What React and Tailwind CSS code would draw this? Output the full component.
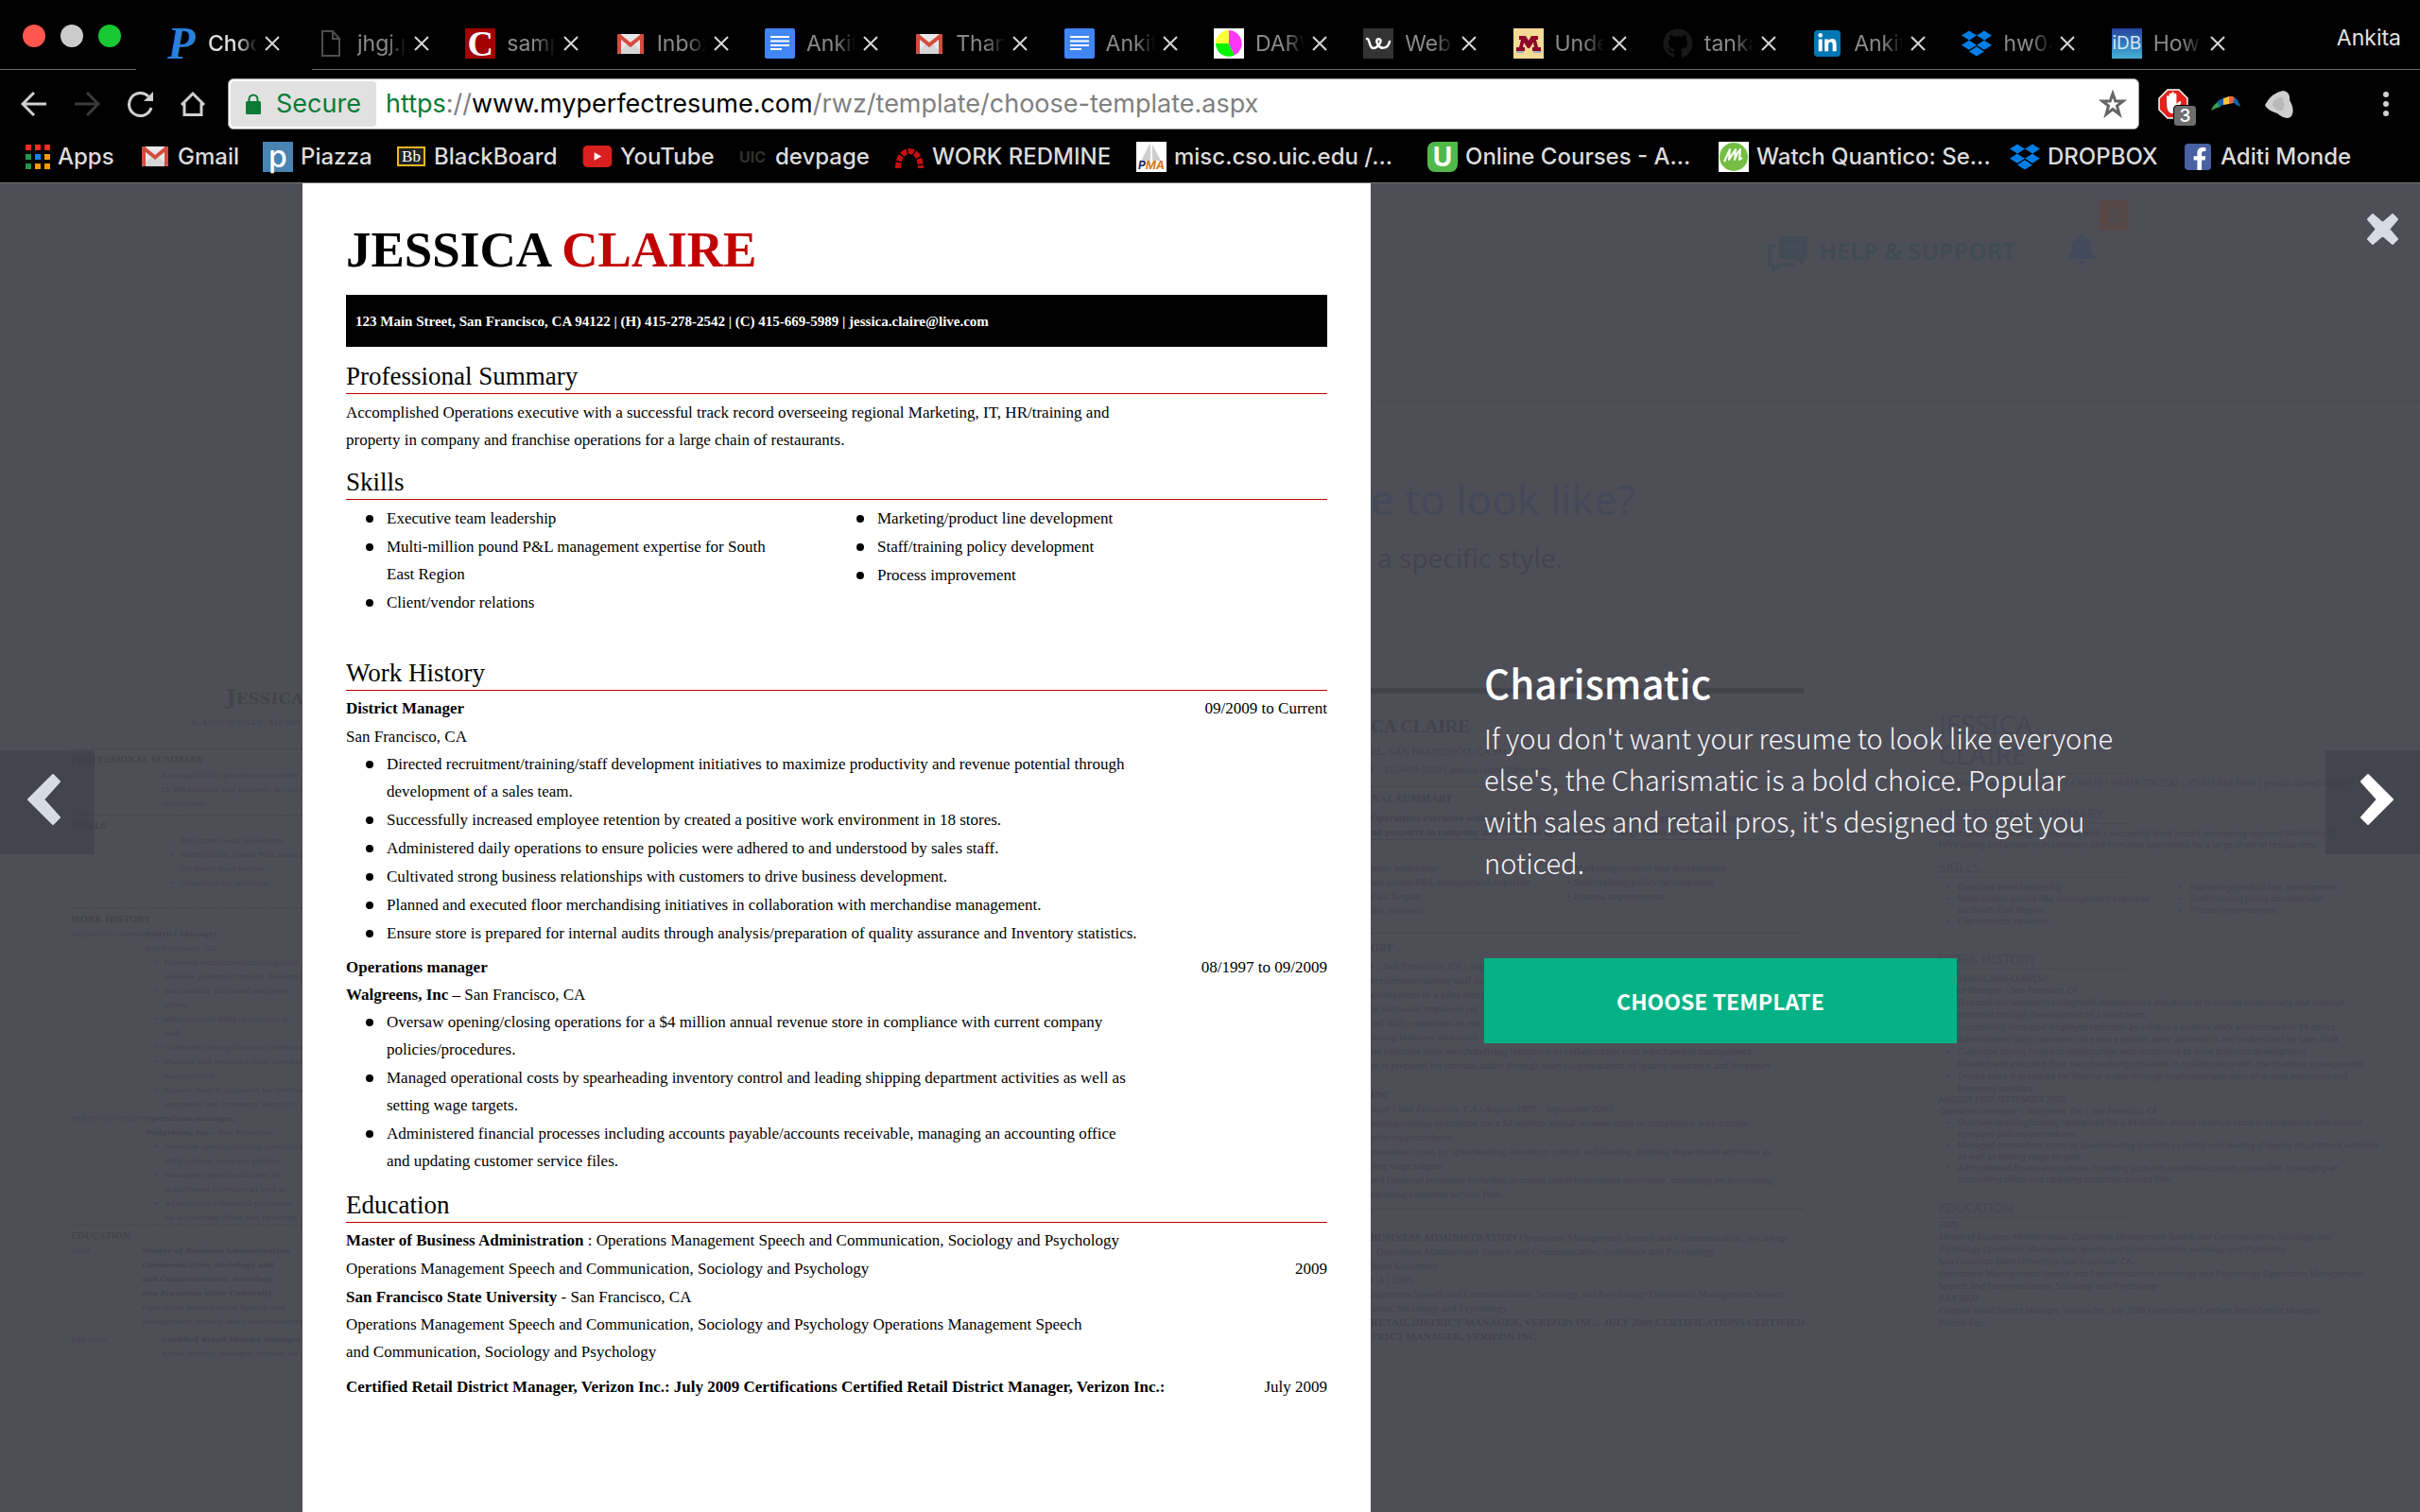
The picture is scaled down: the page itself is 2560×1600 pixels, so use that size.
import React from "react";
import { FaBell, FaDropbox, FaFacebookF, FaGithub, FaLinkedinIn } from "react-icons/fa";

/* ---------- site icons ---------- */

function GmailIcon() {
  return (
    <svg viewBox="0 0 28 21" className="h-[21px] w-[28px]">
      <rect width="28" height="21" rx="2" fill="#e8e8e8" />
      <path d="M0 21 L11 10 L14 12.500 L17 10 L28 21Z" fill="#d6d6d6" />
      <path d="M0 2Q0 0 2 0H4V21H2Q0 21 0 19ZM28 2Q28 0 26 0H24V21H26Q28 21 28 19Z" fill="#d54b3d" />
      <path d="M1 1 L14 11.500 L27 1" fill="none" stroke="#d54b3d" strokeWidth="4" />
    </svg>
  );
}

function DocsIcon() {
  return (
    <svg viewBox="0 0 32 32" className="size-8">
      <rect width="32" height="32" rx="2" fill="#4285f4" />
      <path d="M6 9H26M6 13.500H26M6 18H26M6 22H18" stroke="#fff" strokeWidth="2" />
    </svg>
  );
}

function FileIcon() {
  return (
    <svg viewBox="0 0 20 28" className="h-[28px] w-[20px]" fill="none" stroke="#4d4d4d" strokeWidth="2">
      <path d="M1 1H12L19 9V27H1ZM12 1V9H19" />
    </svg>
  );
}

function PieIcon() {
  return (
    <svg viewBox="0 0 32 32" className="size-8">
      <rect width="32" height="32" fill="#fff" />
      <path d="M16 16V2A14 14 0 0 0 2 16Z" fill="#ffff3a" />
      <path d="M16 16H2A14 14 0 0 0 22 28.500Z" fill="#00f400" />
      <path d="M16 16L22 28.500A14 14 0 0 0 16 2Z" fill="#ff35fa" />
    </svg>
  );
}

function WeeblyIcon() {
  return (
    <svg viewBox="0 0 32 32" className="size-8">
      <rect width="32" height="32" fill="#333" />
      <path
        d="M4 11C7 10 6 21 11 21C15 21 20 14 18 12C16 10 13 12 15 16C17 22 26 23 28 14"
        fill="none"
        stroke="#fff"
        strokeWidth="2.500"
        strokeLinecap="round"
      />
    </svg>
  );
}

function MinnesotaIcon() {
  return (
    <svg viewBox="0 0 32 32" className="size-8">
      <rect width="32" height="32" fill="#f3db93" />
      <path d="M3 24H11V26H3ZM21 24H30V26H21Z" fill="#a9adb9" />
      <path
        d="M6 8H13L16 13L19 8H26V12H24L26 20H29V24H20V20H22L21 15L17 21H15L11 15L10 20H12V24H3V20H6L8 12H6Z"
        fill="#90062c"
      />
    </svg>
  );
}

function AppsIcon() {
  const cells = ["#ff2a20", "#ff2a20", "#ff2a20", "#24974a", "#1183ff", "#f59b00", "#24974a", "#f59b00", "#f59b00"];
  return (
    <span className="grid grid-cols-3 gap-1">
      {cells.map((c, i) => (
        <span key={i} className="size-[6px]" style={{ backgroundColor: c }} />
      ))}
    </span>
  );
}

function YoutubeIcon() {
  return (
    <svg viewBox="0 0 32 24" className="h-[23px] w-8">
      <rect width="32" height="24" rx="5" fill="#d8201f" />
      <path d="M12.500 7.500L20.500 12L12.500 16.500Z" fill="#fff" />
    </svg>
  );
}

function RedmineIcon() {
  return (
    <svg viewBox="0 0 32 24" className="h-6 w-8">
      <path d="M4 24C4 0 28 0 28 24" fill="none" stroke="#c41010" strokeWidth="6" strokeDasharray="6 1.500" />
    </svg>
  );
}

function SailIcon() {
  return (
    <span className="relative flex size-8 items-end justify-center bg-white">
      <svg viewBox="0 0 32 22" className="absolute top-0 left-0 h-[22px] w-8" fill="#cfcfcf">
        <path d="M15 1L15 20H5ZM17 3L26 20H17Z" />
      </svg>
      <b className="relative text-[12px] leading-[14px] italic text-[#20255c]">
        P<span className="text-[#e07a1c]">MA</span>
      </b>
    </span>
  );
}

function CircleMIcon() {
  return (
    <svg viewBox="0 0 32 32" className="size-8">
      <rect width="32" height="32" fill="#fff" />
      <circle cx="16" cy="16" r="15" fill="#74bf43" />
      <path d="M6 21C8 17 10 12 12 8L11 19L18 8L17 19C19 14 21 10 23 8L22 19L25 17" fill="none" stroke="#fff" strokeWidth="2" strokeLinejoin="round" />
    </svg>
  );
}

const icons = {
  p: <b className="font-['Liberation_Serif',serif] text-[48px] leading-8 italic text-[#2a7fdc]">P</b>,
  file: <FileIcon />,
  c: (
    <b className="flex size-8 items-center justify-center bg-[#a30000] font-['Liberation_Serif',serif] text-[38px] leading-8 text-white">
      C
    </b>
  ),
  gmail: <GmailIcon />,
  docs: <DocsIcon />,
  pie: <PieIcon />,
  weebly: <WeeblyIcon />,
  minn: <MinnesotaIcon />,
  github: <FaGithub className="size-8 text-[#191717]" />,
  linkedin: (
    <span className="flex size-7 items-center justify-center rounded-sm bg-[#0077b5]">
      <FaLinkedinIn className="size-[22px] text-white" />
    </span>
  ),
  dropbox: <FaDropbox className="size-8 text-[#007ee5]" />,
  idb: (
    <span className="flex size-8 items-center justify-center bg-linear-to-b from-[#2743a0] to-[#45b1d6] text-[19px] leading-8 text-[#d5e6f5]">
      iDB
    </span>
  ),
  apps: <AppsIcon />,
  piazza: (
    <span className="flex size-8 items-center justify-center bg-[#4783b3] text-[32px] leading-6 font-medium text-white">
      p
    </span>
  ),
  bb: (
    <span className="flex h-[21px] w-[30px] items-center justify-center border-2 border-[#e8b61f] bg-[#222] font-['Liberation_Serif',serif] text-[17px] leading-4 text-white">
      Bb
    </span>
  ),
  youtube: <YoutubeIcon />,
  uic: <span className="text-[16px] leading-6 font-bold text-[#2f2f2f]">UIC</span>,
  redmine: <RedmineIcon />,
  sail: <SailIcon />,
  udemy: (
    <b className="flex size-8 items-center justify-center rounded-lg rounded-tr-none bg-[#51b84a] text-[28px] leading-8 text-white">
      U
    </b>
  ),
  circlem: <CircleMIcon />,
  facebook: (
    <span className="flex size-7 items-end justify-end rounded-sm bg-[#4861a3]">
      <FaFacebookF className="size-6 text-white" />
    </span>
  ),
};

/* ---------- browser chrome ---------- */

const tabs = [
  ["file", "jhgj.pdf"],
  ["c", "sample"],
  ["gmail", "Inbox"],
  ["docs", "Ankita"],
  ["gmail", "Thank"],
  ["docs", "Ankita"],
  ["pie", "DARW"],
  ["weebly", "Webs"],
  ["minn", "Under"],
  ["github", "tanka"],
  ["linkedin", "Ankita"],
  ["dropbox", "hw04"],
  ["idb", "How"],
];

function Tab({ icon, title, active }) {
  return (
    <div className={active ? "flex w-[186px] pt-[30px] pl-8" : "flex flex-1 border-b border-[#6b6b6b] pt-[30px] pl-1"}>
      <button type="button" className="flex h-8 items-center gap-3">
        <span className="flex w-8 items-center justify-center">{icons[icon]}</span>
        <span
          className={
            "w-[52px] overflow-hidden text-left text-[23px] leading-8 whitespace-nowrap [mask-image:linear-gradient(to_right,black_60%,transparent)] " +
            (active ? "font-medium text-[#dedede]" : "text-[#8a8a8a]")
          }
        >
          {title}
        </span>
      </button>
      <button type="button" aria-label={"Close " + title} className="ml-2 flex h-8 items-center">
        <svg viewBox="0 0 16 16" className="size-4" stroke="#d6d6d6" strokeWidth="2">
          <path d="M1 1L15 15M15 1L1 15" />
        </svg>
      </button>
    </div>
  );
}

function NavButton({ label, dim, children }) {
  return (
    <button type="button" aria-label={label} className={dim ? "text-[#3a3a3a]" : "text-[#d0d0d0]"}>
      <svg viewBox="0 0 28 28" className="size-7" fill="none" stroke="currentColor" strokeWidth="3">
        {children}
      </svg>
    </button>
  );
}

const bookmarks = [
  ["gmail", "Gmail", "w-[130px]"],
  ["piazza", "Piazza", "w-[141px]"],
  ["bb", "BlackBoard", "w-[197px]"],
  ["youtube", "YouTube", "w-[164px]"],
  ["uic", "devpage", "w-[166px]"],
  ["redmine", "WORK REDMINE", "w-[256px]"],
  ["sail", "misc.cso.uic.edu /...", "w-[308px]"],
  ["udemy", "Online Courses - A...", "w-[308px]"],
  ["circlem", "Watch Quantico: Se...", "w-[308px]"],
  ["dropbox", "DROPBOX", "w-[183px]"],
  ["facebook", "Aditi Monde", "w-[200px]"],
];

function BrowserChrome() {
  return (
    <header className="border-b border-[#777] bg-black">
      <div className="flex h-[74px]">
        <div className="flex w-36 items-start gap-4 border-b border-[#6b6b6b] pt-[26px] pl-6">
          <button type="button" aria-label="Close window" className="size-6 rounded-full bg-[#ff564d]" />
          <button type="button" aria-label="Minimise window" className="size-6 rounded-full bg-[#cbcbcb]" />
          <button type="button" aria-label="Zoom window" className="size-6 rounded-full bg-[#18c932]" />
        </div>
        <Tab icon="p" title="Choose" active />
        <div className="flex w-[2058px]">
          {tabs.map(([icon, title], i) => (
            <Tab key={i} icon={icon} title={title} />
          ))}
        </div>
        <div className="flex flex-1 justify-end border-b border-[#6b6b6b] pt-6 pr-5">
          <button type="button" className="h-8 text-[23px] leading-8 text-[#e2e2e2]">
            Ankita
          </button>
        </div>
      </div>

      <div className="flex items-center pt-[9px] pl-[22px]">
        <nav className="flex w-[219px] gap-7">
          <NavButton label="Back">
            <path d="M27 14H2M14 2L2 14L14 26" />
          </NavButton>
          <NavButton label="Forward" dim>
            <path d="M1 14H26M14 2L26 14L14 26" />
          </NavButton>
          <NavButton label="Reload">
            <path d="M26 18A12 12 0 1 1 23 6" />
            <path d="M28 1V11H18Z" fill="currentColor" stroke="none" />
          </NavButton>
          <NavButton label="Home">
            <path d="M2 15L14 3L26 15M5 13V25.500H23V13" />
          </NavButton>
        </nav>
        <div className="flex h-[54px] flex-1 items-center rounded-md border border-[#999] bg-white text-[27px] leading-[48px]">
          <button type="button" className="ml-[2px] flex h-12 w-[154px] items-center rounded bg-[#e1e1e1] pl-4 text-[#0b7a35]">
            <svg viewBox="0 0 16 22" className="h-[22px] w-4">
              <rect y="8" width="16" height="14" rx="1.500" fill="currentColor" />
              <path d="M3.500 9V6a4.500 4.500 0 0 1 9 0V9" fill="none" stroke="currentColor" strokeWidth="2" />
            </svg>
            <span className="ml-4">Secure</span>
          </button>
          <div
            role="textbox"
            aria-label="Address"
            contentEditable
            suppressContentEditableWarning
            className="ml-[10px] flex-1 whitespace-nowrap text-[#808080]"
          >
            <span className="text-[#0b7a35]">https</span>://<span className="text-black">www.myperfectresume.com</span>
            /rwz/template/choose-template.aspx
          </div>
          <button type="button" aria-label="Bookmark this page" className="mr-[12px]">
            <svg viewBox="0 0 30 30" className="size-[30px]" fill="none" stroke="#666" strokeWidth="3">
              <path d="M15 4L17.800 12H26L19.500 17L22 26L15 20.500L8 26L10.500 17L4 12H12.200Z" />
            </svg>
          </button>
        </div>
        <div className="flex h-[54px] w-[297px] items-center pl-5">
          <button type="button" aria-label="Ad blocker, 3 blocked" className="relative">
            <svg viewBox="0 0 32 32" className="size-8">
              <path d="M10 1H22L31 10V22L22 31H10L1 22V10Z" fill="#e2221c" stroke="#fff" strokeWidth="1.500" />
              <path
                d="M9 13V8.500a1.300 1.300 0 0 1 2.600 0V6a1.300 1.300 0 0 1 2.600 0V4.500a1.300 1.300 0 0 1 2.600 0V6a1.300 1.300 0 0 1 2.600 0V16l3-3q2 0 2 1.500L20 24Q15 28 11 24Q9 21 9 13Z"
                fill="#fff"
              />
            </svg>
            <span className="absolute top-[17px] left-4 flex h-[23px] w-[25px] items-center justify-center rounded-sm border border-black bg-[#6e6e6e] text-[19px] leading-5 font-medium text-white">
              3
            </span>
          </button>
          <button type="button" aria-label="Boomerang" className="ml-6">
            <svg viewBox="0 0 32 18" className="h-[18px] w-8">
              <path d="M0 16Q2 10 7 7L10 12Q5 13 0 16Z" fill="#35a256" />
              <path d="M6 7Q9 4 13 3L14 10Q11 10 9 12Z" fill="#1066ab" />
              <path d="M13 3L19 1V9L13 10Z" fill="#fbc336" />
              <path d="M19 1Q24 0 25 3L24 8L19 9Z" fill="#ee6440" />
              <path d="M25 2Q29 5 31 12Q27 11 23 7Z" fill="#1066ab" />
            </svg>
          </button>
          <button type="button" aria-label="Extension" className="ml-6">
            <svg viewBox="0 0 32 32" className="size-8">
              <path d="M1 17Q8 4 20 2Q28 3 27 12Q33 22 29 29Q24 34 14 26Q2 22 1 17Z" fill="#cfcfcf" />
              <path d="M9 17Q10 9 19 9Q23 16 20 22Q14 26 9 17Z" fill="#b9b9b9" />
            </svg>
          </button>
          <button type="button" aria-label="Menu" className="mr-[33px] ml-auto flex flex-col gap-1">
            <span className="size-[6px] rounded-full bg-[#d0d0d0]" />
            <span className="size-[6px] rounded-full bg-[#d0d0d0]" />
            <span className="size-[6px] rounded-full bg-[#d0d0d0]" />
          </button>
        </div>
      </div>

      <nav className="flex h-14 items-center pt-px pl-[27px] text-[24px] leading-8 font-medium whitespace-nowrap text-[#dcdcdc]">
        <a href="#apps" className="flex w-[121px] items-center gap-2">
          {icons.apps}
          Apps
        </a>
        {bookmarks.map(([icon, title, width]) => (
          <a key={title} href="#bookmark" className={"flex items-center gap-2 " + width}>
            <span className="flex w-8 shrink-0 items-center justify-center">{icons[icon]}</span>
            {title}
          </a>
        ))}
      </nav>
    </header>
  );
}

/* ---------- dimmed page behind the dialog ---------- */

function Lines({ items, className = "" }) {
  return (
    <div className={className}>
      {items.map((t, i) => (
        <p key={i}>{t}</p>
      ))}
    </div>
  );
}

function Bullets({ items, className = "" }) {
  return (
    <ul className={className}>
      {items.map((lines, i) => (
        <li key={i} className="flex">
          <span className="w-5 shrink-0 pl-2">•</span>
          <Lines items={lines} />
        </li>
      ))}
    </ul>
  );
}

function LeftThumbnail() {
  return (
    <div
      aria-hidden="true"
      className="absolute inset-0 overflow-hidden pt-[529px] pl-[75px] font-['DejaVu_Serif',serif] text-[8px] leading-[15px] whitespace-nowrap text-[#43434c]"
    >
      <p className="pl-[164px] text-[22px] leading-7 font-bold text-[#424446]">
        J<span className="text-[17px]">ESSICA</span>
      </p>
      <Lines className="mt-1 pl-[127px]" items={["H: 415-278-2542 C: 415-669"]} />
      <div className="mt-5 border-t border-dashed border-[#43434b] pt-1">
        <h4 className="text-[9px] font-bold text-[#424446]">PROFESSIONAL SUMMARY</h4>
        <Lines
          className="mt-px pl-24"
          items={["Accomplished Operations executive", "IT, HR/training and property in company", "restaurants."]}
        />
      </div>
      <div className="mt-1 border-t border-dashed border-[#43434b] pt-1">
        <h4 className="text-[9px] font-bold text-[#424446]">SKILLS</h4>
        <Bullets
          className="pl-24"
          items={[["Executive team leadership"], ["Multi-million pound P&L management", "for South East Region"], ["Client/vendor relations"]]}
        />
      </div>
      <div className="mt-[18px] border-t border-dashed border-[#43434b] pt-[5px]">
        <h4 className="text-[9px] font-bold text-[#424446]">WORK HISTORY</h4>
        <div className="flex">
          <p className="w-24">09/2009 to Current</p>
          <div>
            <p className="font-bold">District Manager,</p>
            <p className="italic">San Francisco, CA</p>
            <Bullets
              items={[
                ["Directed recruitment/training/staff", "revenue potential through development"],
                ["Successfully increased employee", "stores."],
                ["Administered daily operations to", "staff."],
                ["Cultivated strong business relationships"],
                ["Planned and executed floor merchandising", "management."],
                ["Ensure store is prepared for internal", "assurance and Inventory statistics."],
              ]}
            />
          </div>
        </div>
        <div className="flex">
          <p className="w-24">08/1997 to 09/2009</p>
          <div>
            <p className="font-bold">Operations manager,</p>
            <p>
              <b>Walgreens, Inc – </b>
              <i>San Francisco</i>
            </p>
            <Bullets
              items={[
                ["Oversaw opening/closing operations", "with current company policies"],
                ["Managed operational costs by", "department activities as well as"],
                ["Administered financial processes", "an accounting office and updating"],
              ]}
            />
          </div>
        </div>
      </div>
      <div className="border-t border-dashed border-[#43434b] pt-1">
        <h4 className="text-[9px] font-bold text-[#424446]">EDUCATION</h4>
        <div className="flex">
          <p className="w-24">2009</p>
          <div>
            <Lines
              className="font-bold"
              items={["Master of Business Administration", "Communication, Sociology and", "and Communication, Sociology"]}
            />
            <p className="font-bold italic">San Francisco State University</p>
            <Lines items={["Operations Management Speech and", "Management Speech and Communication"]} />
          </div>
        </div>
        <div className="mt-1 flex">
          <p className="w-24">July 2009</p>
          <div>
            <p className="font-bold">Certified Retail District Manager</p>
            <p>Retail District Manager, Verizon Inc</p>
          </div>
        </div>
      </div>
    </div>
  );
}

function MiddleThumbnail() {
  return (
    <div className="w-[601px] font-['Liberation_Serif',serif] text-[11px] leading-[15px] text-[#43434c]">
      <div className="mr-[143px] border-t-[6px] border-[#43434b] pt-[23px]">
        <p className="text-[19px] leading-6 font-bold">CA CLAIRE</p>
        <p className="mt-[7px]">EL, SAN FRANCISCO, CA 94122</p>
        <p className="mt-1">C: 415-669-5989 | jessica.claire@live.com</p>
      </div>
      <div className="mt-[10px] mr-[143px] border-t border-[#46464f] pt-[5px]">
        <h4 className="text-[12px] font-bold italic">NAL SUMMARY</h4>
        <Lines
          className="mt-[5px] font-bold"
          items={[
            "Operations executive with a successful track record overseeing regional Marketing, IT,",
            "nd property in company and franchise operations for a large chain of restaurants.",
          ]}
        />
      </div>
      <div className="mr-[143px] grid grid-cols-[208px_1fr] border-t border-[#46464f] pt-[22px]">
        <Lines items={["team leadership", "ion pound P&L management expertise", "East Region", "dor relations"]} />
        <Lines items={["• Marketing/product line development", "• Staff/training policy development", "• Process improvement"]} />
      </div>
      <div className="mt-4 mr-[143px] border-t border-[#46464f] pt-2">
        <h4 className="text-[12px] font-bold italic">ORY</h4>
        <p className="mt-1 italic">r | San Francisco, CA | September</p>
        <Lines
          items={[
            "ecruitment/training/staff de",
            "evelopment of a sales team",
            "ly increased employee ret",
            "red daily operations to ens",
            "strong business relationsh",
            "nd executed floor merchandising initiatives in collaboration with merchandise management.",
            "re is prepared for internal audits through analysis/preparation of quality assurance and Inventory",
          ]}
        />
        <p className="mt-4 font-bold">INC</p>
        <p className="italic">ager | San Francisco, CA | August 1997 - September 2009</p>
        <Lines
          items={[
            "pening/closing operations for a $4 million annual revenue store in compliance with current",
            "policies/procedures.",
            "perational costs by spearheading inventory control and leading shipping department activities as",
            "ting wage targets.",
            "red financial processes including accounts payable/accounts receivable, managing an accounting",
            "updating customer service files.",
          ]}
        />
      </div>
      <div className="mt-2 mr-[143px] border-t border-[#46464f] pt-[22px]">
        <p>
          <b>BUSINESS ADMINISTRATION</b> Operations Management Speech and Communication, Sociology
        </p>
        <Lines
          items={[
            ": Operations Management Speech and Communication, Sociology and Psychology",
            "State University",
            "CA | 2009",
            "nagement Speech and Communication, Sociology and Psychology Operations Management Speech",
            "ation, Sociology and Psychology",
          ]}
        />
        <Lines
          className="font-bold"
          items={["RETAIL DISTRICT MANAGER, VERIZON INC.: JULY 2009 CERTIFICATIONS CERTIFIED", "TRICT MANAGER, VERIZON INC."]}
        />
      </div>
    </div>
  );
}

function DottedHeading({ children, className = "" }) {
  return (
    <h4 className={"w-[201px] border-b border-dotted border-[#43434c] text-[14px] leading-5 text-[#444755] " + className}>{children}</h4>
  );
}

function RightThumbnail() {
  return (
    <div className="pt-[22px] font-['Noto_Sans',sans-serif] text-[9px] leading-3 text-[#43434c]">
      <p className="w-[201px] border-b border-dotted border-[#43434c] pb-1 text-[28px] leading-8 text-[#444755]">
        JESSICA
        <br />
        CLAIRE
      </p>
      <p className="mt-1">123 Main Street, San Francisco, CA 94122 | (H) 415-278-2542 | (C) 415-669-5989 | jessica.claire@live.com</p>
      <DottedHeading className="mt-4">PROFESSIONAL SUMMARY</DottedHeading>
      <Lines
        className="mt-1"
        items={[
          "Accomplished Operations executive with a successful track record overseeing regional Marketing, IT,",
          "HR/training and property in company and franchise operations for a large chain of restaurants.",
        ]}
      />
      <DottedHeading className="mt-2">SKILLS</DottedHeading>
      <div className="mt-1 grid grid-cols-[246px_1fr]">
        <Bullets items={[["Executive team leadership"], ["Multi-million pound P&L management expertise", "for South East Region"], ["Client/vendor relations"]]} />
        <Bullets items={[["Marketing/product line development"], ["Staff/training policy development"], ["Process improvement"]]} />
      </div>
      <DottedHeading className="mt-6">WORK HISTORY</DottedHeading>
      <p className="mt-1">SEPTEMBER 2009-CURRENT</p>
      <p className="italic">District Manager | San Francisco, CA</p>
      <Bullets
        className="leading-[13px]"
        items={[
          ["Directed recruitment/training/staff development initiatives to maximize productivity and revenue", "potential through development of a sales team."],
          ["Successfully increased employee retention by created a positive work environment in 18 stores."],
          ["Administered daily operations to ensure policies were adhered to and understood by sales staff."],
          ["Cultivated strong business relationships with customers to drive business development."],
          ["Planned and executed floor merchandising initiatives in collaboration with merchandise management."],
          ["Ensure store is prepared for internal audits through analysis/preparation of quality assurance and", "Inventory statistics."],
        ]}
      />
      <p>AUGUST 1997-SEPTEMBER 2009</p>
      <p className="italic">Operations manager | Walgreens, Inc | San Francisco, CA</p>
      <Bullets
        items={[
          ["Oversaw opening/closing operations for a $4 million annual revenue store in compliance with current", "company policies/procedures."],
          ["Managed operational costs by spearheading inventory control and leading shipping department activities", "as well as setting wage targets."],
          ["Administered financial processes including accounts payable/accounts receivable, managing an", "accounting office and updating customer service files."],
        ]}
      />
      <DottedHeading className="mt-[14px]">EDUCATION</DottedHeading>
      <div className="leading-[13px]">
        <p>2009</p>
        <Lines
          className="italic"
          items={[
            "Master of Business Administration: Operations Management Speech and Communication, Sociology and",
            "Psychology Operations Management Speech and Communication, Sociology and Psychology",
          ]}
        />
        <Lines
          items={[
            "San Francisco State University, San Francisco, CA",
            "Operations Management Speech and Communication, Sociology and Psychology Operations Management",
            "Speech and Communication, Sociology and Psychology",
            "JULY 2009",
          ]}
        />
        <Lines className="italic" items={["Certified Retail District Manager, Verizon Inc.: July 2009 Certifications Certified Retail District Manager,", "Verizon Inc.:"]} />
      </div>
    </div>
  );
}

function DimmedPage() {
  return (
    <div aria-hidden="true" className="absolute inset-0 overflow-hidden font-['Noto_Sans',sans-serif] whitespace-nowrap">
      <div className="flex h-[232px] items-start border-b border-[#4a4a53] pt-[54px] pl-[420px] text-[#414b53]">
        <svg viewBox="0 0 42 40" className="h-10 w-[42px]">
          <path d="M12 2H42V26H38V33L30 26H12Z" fill="currentColor" />
          <path d="M9 12H2V32H6V38L13 32H30" fill="none" stroke="currentColor" strokeWidth="3" />
          <path d="M19 14H22M26 14H29M33 14H36" stroke="#4e4e57" strokeWidth="3" />
        </svg>
        <b className="ml-3 text-[25px] leading-[34px]">HELP &amp; SUPPORT</b>
        <span className="relative ml-[53px]">
          <FaBell className="size-8 text-[#434a5c]" />
          <span className="absolute -top-9 left-[34px] flex size-8 items-center justify-center bg-[#574848] text-[20px] font-bold text-[#494a54]">
            2
          </span>
        </span>
      </div>
      <p className="mt-[72px] text-[44px] leading-[60px] text-[#434958]">e to look like?</p>
      <p className="mt-3 pl-[7px] text-[28px] leading-10 text-[#44444d]">a specific style.</p>
      <div className="mt-[118px] flex">
        <MiddleThumbnail />
        <RightThumbnail />
      </div>
    </div>
  );
}

/* ---------- resume preview ---------- */

function Section({ title, className, children }) {
  return (
    <section className={className}>
      <h2 className="border-b border-[#c20000] text-[27px] leading-9">{title}</h2>
      {children}
    </section>
  );
}

function ResumeList({ items }) {
  return (
    <ul className="flex flex-col gap-px">
      {items.map((lines, i) => (
        <li key={i} className="flex">
          <span className="flex h-[29px] w-[43px] shrink-0 items-center pl-[21px]">
            <span className="size-2 rounded-full bg-black" />
          </span>
          <Lines items={lines} />
        </li>
      ))}
    </ul>
  );
}

function Resume() {
  return (
    <article className="relative w-[1130px] shrink-0 bg-white px-[46px] font-['Liberation_Serif','Times_New_Roman',serif] text-[17px] leading-[29px] whitespace-nowrap text-black">
      <h1 className="pt-[40px] text-[53px] leading-[60px] font-bold">
        JESSICA <span className="text-[#c20000]">CLAIRE</span>
      </h1>
      <p className="mt-[18px] h-[55px] bg-black pl-[10px] text-[15px] leading-[56px] font-bold text-white">
        123 Main Street, San Francisco, CA 94122 | (H) 415-278-2542 | (C) 415-669-5989 | jessica.claire@live.com
      </p>

      <Section title="Professional Summary" className="mt-[13px]">
        <Lines
          className="mt-[5px]"
          items={[
            "Accomplished Operations executive with a successful track record overseeing regional Marketing, IT, HR/training and",
            "property in company and franchise operations for a large chain of restaurants.",
          ]}
        />
      </Section>

      <Section title="Skills" className="mt-3">
        <div className="mt-[5px] grid grid-cols-2">
          <ResumeList
            items={[["Executive team leadership"], ["Multi-million pound P&L management expertise for South", "East Region"], ["Client/vendor relations"]]}
          />
          <ResumeList items={[["Marketing/product line development"], ["Staff/training policy development"], ["Process improvement"]]} />
        </div>
      </Section>

      <Section title="Work History" className="mt-[42px]">
        <div className="mt-1 flex justify-between">
          <b>District Manager</b>
          <span>09/2009 to Current</span>
        </div>
        <p className="mt-px">San Francisco, CA</p>
        <ResumeList
          items={[
            ["Directed recruitment/training/staff development initiatives to maximize productivity and revenue potential through", "development of a sales team."],
            ["Successfully increased employee retention by created a positive work environment in 18 stores."],
            ["Administered daily operations to ensure policies were adhered to and understood by sales staff."],
            ["Cultivated strong business relationships with customers to drive business development."],
            ["Planned and executed floor merchandising initiatives in collaboration with merchandise management."],
            ["Ensure store is prepared for internal audits through analysis/preparation of quality assurance and Inventory statistics."],
          ]}
        />
        <div className="mt-[7px] flex justify-between">
          <b>Operations manager</b>
          <span>08/1997 to 09/2009</span>
        </div>
        <p>
          <b>Walgreens, Inc</b> – San Francisco, CA
        </p>
        <ResumeList
          items={[
            ["Oversaw opening/closing operations for a $4 million annual revenue store in compliance with current company", "policies/procedures."],
            ["Managed operational costs by spearheading inventory control and leading shipping department activities as well as", "setting wage targets."],
            ["Administered financial processes including accounts payable/accounts receivable, managing an accounting office", "and updating customer service files."],
          ]}
        />
      </Section>

      <Section title="Education" className="mt-[14px]">
        <p className="mt-1">
          <b>Master of Business Administration</b> : Operations Management Speech and Communication, Sociology and Psychology
        </p>
        <div className="mt-px flex justify-between">
          <span>Operations Management Speech and Communication, Sociology and Psychology</span>
          <span>2009</span>
        </div>
        <p className="mt-px">
          <b>San Francisco State University</b> - San Francisco, CA
        </p>
        <Lines
          items={[
            "Operations Management Speech and Communication, Sociology and Psychology Operations Management Speech",
            "and Communication, Sociology and Psychology",
          ]}
        />
        <div className="mt-2 flex justify-between">
          <b>Certified Retail District Manager, Verizon Inc.: July 2009 Certifications Certified Retail District Manager, Verizon Inc.:</b>
          <span>July 2009</span>
        </div>
      </Section>
    </article>
  );
}

/* ---------- page ---------- */

export default function App() {
  return (
    <div className="flex min-h-screen flex-col bg-[#4e4e57] font-['Inter','Noto_Sans',sans-serif]">
      <BrowserChrome />
      <main className="relative flex flex-1 overflow-hidden">
        <div className="relative w-1/8 shrink-0">
          <LeftThumbnail />
        </div>
        <Resume />
        <div className="relative flex-1">
          <DimmedPage />
          <div className="relative pt-[500px] pl-[120px] font-['Noto_Sans_CJK_SC','Source_Sans_Pro',sans-serif] text-white">
            <h2 className="text-[42px] leading-[56px] font-medium">Charismatic</h2>
            <p className="mt-2 w-[670px] text-[29px] leading-[44px] font-light text-[#f4f4f6]">
              If you don't want your resume to look like everyone else's, the Charismatic is a bold choice. Popular with sales and
              retail pros, it's designed to get you noticed.
            </p>
            <button type="button" className="mt-20 h-[90px] w-[500px] bg-[#04b285] text-[23px] leading-8 font-bold">
              CHOOSE TEMPLATE
            </button>
          </div>
        </div>

        <button
          type="button"
          aria-label="Previous template"
          className="absolute top-[600px] left-0 flex h-[110px] w-[100px] items-center pb-[6px] pl-[29px] text-[#d7dce4]"
        >
          <span className="absolute inset-0 bg-[#3d3d47]/60" />
          <svg viewBox="0 0 35 54" className="relative h-[54px] w-[35px]">
            <path d="M1 27L27 1L34 8L17 27L34 46L27 53Z" fill="currentColor" stroke="currentColor" strokeWidth="2" strokeLinejoin="round" />
          </svg>
        </button>
        <button
          type="button"
          aria-label="Next template"
          className="absolute top-[600px] right-0 flex h-[110px] w-[100px] items-center justify-end pr-[28px] pb-[6px] text-white"
        >
          <span className="absolute inset-0 bg-[#3d3d47]/60" />
          <svg viewBox="0 0 35 54" className="relative h-[54px] w-[35px]">
            <path d="M34 27L8 1L1 8L18 27L1 46L8 53Z" fill="currentColor" stroke="currentColor" strokeWidth="2" strokeLinejoin="round" />
          </svg>
        </button>
        <button type="button" aria-label="Close preview" className="absolute top-8 right-[23px] text-[#d7dce4]">
          <svg viewBox="0 0 33 33" className="size-[33px]">
            <path
              d="M6 1L16.500 10L27 1L32 6L23 16.500L32 27L27 32L16.500 23L6 32L1 27L10 16.500L1 6Z"
              fill="currentColor"
              stroke="currentColor"
              strokeWidth="2"
              strokeLinejoin="round"
            />
          </svg>
        </button>
      </main>
    </div>
  );
}
